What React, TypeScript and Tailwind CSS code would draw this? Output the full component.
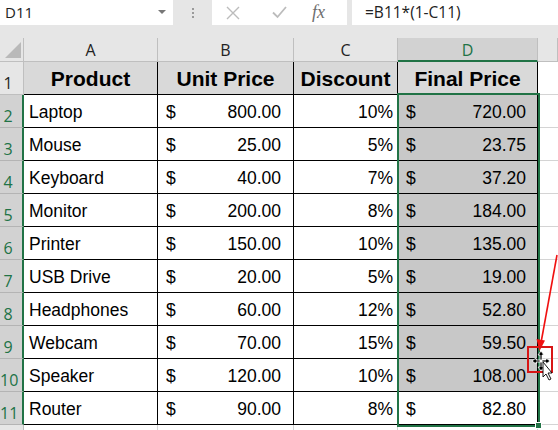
const rows = [
  ["Laptop", "800.00", "10%", "720.00"],
  ["Mouse", "25.00", "5%", "23.75"],
  ["Keyboard", "40.00", "7%", "37.20"],
  ["Monitor", "200.00", "8%", "184.00"],
  ["Printer", "150.00", "10%", "135.00"],
  ["USB Drive", "20.00", "5%", "19.00"],
  ["Headphones", "60.00", "12%", "52.80"],
  ["Webcam", "70.00", "15%", "59.50"],
  ["Speaker", "120.00", "10%", "108.00"],
  ["Router", "90.00", "8%", "82.80"],
];

function FormulaBar() {
  return (
    <div className="flex h-[25px] font-['Open_Sans','Noto_Sans',sans-serif] text-[15px] text-[#222]">
      {/* name box */}
      <div className="relative flex w-[173px] items-center bg-white pl-[5px]">
        D11
        <svg className="absolute left-[158px] top-[10px]" width="8" height="5" viewBox="0 0 8 5">
          <polygon points="0,0 8,0 4,4" fill="#777" />
        </svg>
      </div>
      <div className="flex w-[39px] items-center justify-center pl-[1px]">
        <div className="flex flex-col gap-[2px]">
          <span className="h-[2px] w-[2px] bg-[#9a9a9a]" />
          <span className="h-[2px] w-[2px] bg-[#9a9a9a]" />
          <span className="h-[2px] w-[2px] bg-[#9a9a9a]" />
        </div>
      </div>
      {/* cancel / enter / fx */}
      <div className="flex w-[135px] items-center bg-white">
        <svg className="ml-[14px]" width="14" height="14" viewBox="0 0 14 14">
          <path d="M1 1 L13 13 M13 1 L1 13" stroke="#bcbcbc" strokeWidth="1.4" />
        </svg>
        <svg className="ml-[32px]" width="15" height="13" viewBox="0 0 15 13">
          <path d="M1 6.5 L5.5 11 L14 1" stroke="#bcbcbc" strokeWidth="1.8" fill="none" />
        </svg>
        <span className="ml-[25px] font-['Liberation_Serif',serif] text-[18px] italic text-[#6e6e6e]">
          fx
        </span>
      </div>
      <div className="w-[5px]" />
      <div className="flex flex-1 items-center bg-white pl-[13px] text-[15.5px]">=B11*(1-C11)</div>
    </div>
  );
}

function Corner() {
  return (
    <div className="relative border-b border-r border-[#bfbfbf] bg-[#e6e6e6]">
      <svg className="absolute left-0 top-0" width="24" height="24" viewBox="0 0 24 24">
        <polygon points="21,4 21,20 5,20" fill="#b9b9b9" />
      </svg>
    </div>
  );
}

function ColHead({ label, active }: { label: string; active?: boolean }) {
  return (
    <div
      className={
        active
          ? "flex items-center justify-center border-b-2 border-r border-b-[#217346] border-r-[#bfbfbf] bg-[#d2d2d2] pt-[1px] font-['Open_Sans',sans-serif] text-[16px] text-[#217346]"
          : "flex items-center justify-center border-b border-r border-[#bfbfbf] bg-[#e6e6e6] font-['Open_Sans',sans-serif] text-[16px] text-[#222]"
      }
    >
      {label}
    </div>
  );
}

function RowHead({ n, active }: { n: number; active?: boolean }) {
  return (
    <div
      className={
        active
          ? "flex items-end border-b border-r-2 border-b-[#b4b4b4] border-r-[#217346] bg-[#d2d2d2] pb-[3px] font-['Open_Sans',sans-serif] text-[16px] text-[#217346]"
          : "flex items-end border-b border-r border-[#bfbfbf] bg-[#e6e6e6] pb-[3px] font-['Open_Sans',sans-serif] text-[16px] text-[#222]"
      }
    >
      <span className="w-[16px] text-center leading-none">{n}</span>
    </div>
  );
}

export default function App() {
  return (
    <div className="relative h-[430px] w-[558px] overflow-hidden bg-[#e6e6e6] font-['Liberation_Sans',Arial,sans-serif] text-black">
      <FormulaBar />
      <div className="h-[13px]" />

      <div className="relative grid grid-cols-[24px_134px_136px_104px_140px_20px] grid-rows-[24px_repeat(11,33px)_10px] bg-white">
        <Corner />
        <ColHead label="A" />
        <ColHead label="B" />
        <ColHead label="C" />
        <ColHead label="D" active />
        <ColHead label="" />

        {/* header row */}
        <RowHead n={1} />
        {["Product", "Unit Price", "Discount", "Final Price"].map((h) => (
          <div
            key={h}
            className="flex items-center justify-center border-b border-r border-black bg-[#d9d9d9] pt-[2px] text-[21px] font-bold"
          >
            {h}
          </div>
        ))}
        <div className="border-b border-[#d4d4d4]" />

        {rows.map((r, i) => (
          <div key={r[0]} className="contents">
            <RowHead n={i + 2} active />
            <div className="flex items-center border-b border-r border-black pl-[5px] pt-[2px] text-[17.5px]">
              {r[0]}
            </div>
            <div className="flex items-center justify-between border-b border-r border-black pl-[8px] pr-[12px] pt-[2px] text-[17.5px]">
              <span>$</span>
              <span>{r[1]}</span>
            </div>
            <div className="flex items-center justify-end border-b border-r border-black pr-[4px] pt-[2px] text-[17.5px]">
              {r[2]}
            </div>
            <div
              className={
                i === rows.length - 1
                  ? "flex items-center justify-between border-b border-r border-black bg-white pl-[8px] pr-[11px] pt-[2px] text-[17.5px]"
                  : "flex items-center justify-between border-b border-r border-black bg-[#c8c8c8] pl-[8px] pr-[11px] pt-[2px] text-[17.5px]"
              }
            >
              <span>$</span>
              <span>{r[3]}</span>
            </div>
            <div className="border-b border-[#d4d4d4]" />
          </div>
        ))}

        {/* partial row 12 */}
        <div className="border-r border-[#bfbfbf] bg-[#e6e6e6]" />
        <div className="border-r border-[#d4d4d4]" />
        <div className="border-r border-[#d4d4d4]" />
        <div className="border-r border-[#d4d4d4]" />
        <div className="border-r border-[#d4d4d4]" />
        <div />

        {/* selection D2:D11 */}
        <div className="absolute left-[397px] top-[55px] h-[334px] w-[143px] border-2 border-[#217346]" />
        <div className="absolute left-[535px] top-[384px] h-[7px] w-[7px] border border-white bg-[#217346]" />
      </div>

      {/* red annotation */}
      <svg className="absolute left-0 top-0" width="558" height="430" viewBox="0 0 558 430">
        <line x1="557" y1="255" x2="541.5" y2="340" stroke="#f01010" strokeWidth="1.6" />
        <polygon points="536.5,339 545,340.5 539.5,351" fill="#f01010" />
      </svg>
      <div className="absolute left-[527px] top-[346px] h-[27px] w-[26px] border-2 border-[#d81515]" />
      <svg className="absolute left-[529px] top-[349px]" width="26" height="34" viewBox="0 0 26 34">
        <g fill="#000" stroke="#fff" strokeWidth="0.8">
          <polygon points="12,2 15,6 13,6 13,11 11,11 11,6 9,6" />
          <polygon points="3,12 7,9 7,11 11,11 11,13 7,13 7,15" />
          <polygon points="21,12 17,9 17,11 13,11 13,13 17,13 17,15" />
          <polygon points="12,22 9,18 11,18 11,13 13,13 13,18 15,18" />
        </g>
        <polygon points="14,13 14,28 17,25 20,31 22,30 19,24 23,24" fill="#fff" stroke="#000" strokeWidth="0.9" />
      </svg>
    </div>
  );
}
